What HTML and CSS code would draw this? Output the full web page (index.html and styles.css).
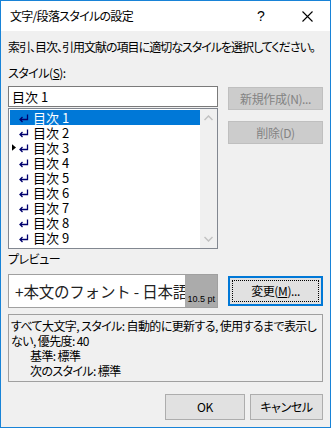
FILE: index.html
```html
<!DOCTYPE html>
<html lang="ja">
<head>
    <meta charset="UTF-8">
    <title>文字/段落スタイルの設定</title>
    <link rel="stylesheet" href="styles.css">
</head>
<body>
    <div class="window">
        <div class="titlebar">
            <span class="title">文字/段落スタイルの設定</span>
            <span class="help">?</span>
            <span class="close">
                <svg width="11" height="11" viewBox="0 0 11 11"><path d="M0.5 0.5 L10.5 10.5 M10.5 0.5 L0.5 10.5" stroke="#000" stroke-width="1.1" fill="none"/></svg>
            </span>
        </div>
        <div class="content">
            <p class="intro">索引、目次、引用文献の項目に適切なスタイルを選択してください。</p>
            <div class="label">スタイル(<u>S</u>):</div>
            <div class="style-row">
                <div class="style-left">
                    <div class="textbox">目次 1</div>
                    <div class="listbox">
                        <ul class="items">
                            <li class="selected"><span class="mark"></span><svg class="ret" viewBox="0 0 10 9"><path d="M8.5 0.5 V5.5 H1.5 M3.5 3 L1 5.5 L3.5 8" stroke="#00006e" stroke-width="1.3" fill="none"/></svg>目次 1</li>
                            <li><span class="mark"></span><svg class="ret" viewBox="0 0 10 9"><path d="M8.5 0.5 V5.5 H1.5 M3.5 3 L1 5.5 L3.5 8" stroke="#00006e" stroke-width="1.3" fill="none"/></svg>目次 2</li>
                            <li><span class="mark"><svg viewBox="0 0 5 8"><path d="M0 0 L5 4 L0 8 Z" fill="#000"/></svg></span><svg class="ret" viewBox="0 0 10 9"><path d="M8.5 0.5 V5.5 H1.5 M3.5 3 L1 5.5 L3.5 8" stroke="#00006e" stroke-width="1.3" fill="none"/></svg>目次 3</li>
                            <li><span class="mark"></span><svg class="ret" viewBox="0 0 10 9"><path d="M8.5 0.5 V5.5 H1.5 M3.5 3 L1 5.5 L3.5 8" stroke="#00006e" stroke-width="1.3" fill="none"/></svg>目次 4</li>
                            <li><span class="mark"></span><svg class="ret" viewBox="0 0 10 9"><path d="M8.5 0.5 V5.5 H1.5 M3.5 3 L1 5.5 L3.5 8" stroke="#00006e" stroke-width="1.3" fill="none"/></svg>目次 5</li>
                            <li><span class="mark"></span><svg class="ret" viewBox="0 0 10 9"><path d="M8.5 0.5 V5.5 H1.5 M3.5 3 L1 5.5 L3.5 8" stroke="#00006e" stroke-width="1.3" fill="none"/></svg>目次 6</li>
                            <li><span class="mark"></span><svg class="ret" viewBox="0 0 10 9"><path d="M8.5 0.5 V5.5 H1.5 M3.5 3 L1 5.5 L3.5 8" stroke="#00006e" stroke-width="1.3" fill="none"/></svg>目次 7</li>
                            <li><span class="mark"></span><svg class="ret" viewBox="0 0 10 9"><path d="M8.5 0.5 V5.5 H1.5 M3.5 3 L1 5.5 L3.5 8" stroke="#00006e" stroke-width="1.3" fill="none"/></svg>目次 8</li>
                            <li><span class="mark"></span><svg class="ret" viewBox="0 0 10 9"><path d="M8.5 0.5 V5.5 H1.5 M3.5 3 L1 5.5 L3.5 8" stroke="#00006e" stroke-width="1.3" fill="none"/></svg>目次 9</li>
                        </ul>
                        <div class="scrollbar">
                            <svg width="9" height="6" viewBox="0 0 9 6"><path d="M0.5 5 L4.5 1 L8.5 5" stroke="#c2c2c2" stroke-width="1.5" fill="none"/></svg>
                            <svg width="9" height="6" viewBox="0 0 9 6"><path d="M0.5 1 L4.5 5 L8.5 1" stroke="#c2c2c2" stroke-width="1.5" fill="none"/></svg>
                        </div>
                    </div>
                </div>
                <div class="side-buttons">
                    <button class="btn" disabled>新規作成(N)...</button>
                    <button class="btn" disabled>削除(D)</button>
                </div>
            </div>
            <div class="label preview-label">プレビュー</div>
            <div class="preview-row">
                <div class="preview">
                    <span class="sample">+本文のフォント - 日本語</span>
                    <span class="size">10.5 pt</span>
                </div>
                <button class="btn focused"><span class="focus-ring">変更(<u>M</u>)...</span></button>
            </div>
            <div class="details">
                <div>すべて大文字, スタイル: 自動的に更新する, 使用するまで表示しない, 優先度: 40</div>
                <div class="indent">基準: 標準</div>
                <div class="indent">次のスタイル: 標準</div>
            </div>
            <div class="footer">
                <button class="btn ok">OK</button>
                <button class="btn cancel">キャンセル</button>
            </div>
        </div>
    </div>
</body>
</html>
```

FILE: styles.css
```css
html, body {
    margin: 0;
    padding: 0;
    width: 331px;
    height: 428px;
    overflow: hidden;
}

body {
    font-family: "Noto Sans CJK JP", sans-serif;
    font-size: 12px;
    font-feature-settings: "palt" 1;
    color: #000;
}

.window {
    box-sizing: border-box;
    width: 331px;
    height: 428px;
    border: 1px solid #1883d7;
    background: #f0f0f0;
    display: flex;
    flex-direction: column;
}

.titlebar {
    height: 30px;
    background: #fff;
    display: flex;
    align-items: center;
    padding-left: 9px;
}

.title {
    flex: 1;
    line-height: 16px;
    letter-spacing: -0.7px;
}

.help {
    font-family: "Liberation Sans", sans-serif;
    font-size: 14px;
    width: 46px;
    text-align: center;
}

.close {
    width: 46px;
    display: flex;
    justify-content: center;
}

.content {
    padding: 0 7px;
    display: flex;
    flex-direction: column;
}

.intro {
    margin: 8px 0 0;
    line-height: 16px;
    white-space: nowrap;
    letter-spacing: -1px;
}

.label {
    margin-top: 10px;
    line-height: 16px;
    letter-spacing: -0.5px;
}

.style-row {
    display: flex;
    gap: 10px;
    margin-top: 5px;
}

.style-left {
    width: 211px;
    display: flex;
    flex-direction: column;
    gap: 1px;
}

.textbox {
    box-sizing: border-box;
    height: 21px;
    background: #fff;
    border: 1px solid #7a7a7a;
    padding-left: 3px;
    font-size: 13px;
    line-height: 19px;
}

.listbox {
    box-sizing: border-box;
    height: 141px;
    background: #fff;
    border: 1px solid #828790;
    display: flex;
    padding: 1px 0 1px 1px;
}

.items {
    list-style: none;
    margin: 0;
    padding: 0;
    flex: 1;
}

.items li {
    height: 15px;
    line-height: 15px;
    font-size: 13px;
    display: flex;
    align-items: center;
    padding-left: 2px;
}

.items li.selected {
    background: #0078d7;
    color: #fff;
}

.mark {
    width: 6px;
    display: flex;
    align-items: center;
}

.mark svg {
    width: 4px;
    height: 7px;
}

.ret {
    width: 10px;
    height: 9px;
    margin: 1px 4px 0 1px;
}

.scrollbar {
    width: 17px;
    background: #f0f0f0;
    margin-top: -1px;
    margin-bottom: -1px;
    display: flex;
    flex-direction: column;
    justify-content: space-between;
    align-items: center;
    padding: 6px 0;
    box-sizing: border-box;
}

.side-buttons {
    display: flex;
    flex-direction: column;
    gap: 11px;
    margin-top: 1px;
}

.btn {
    box-sizing: border-box;
    width: 95px;
    height: 23px;
    font-family: inherit;
    font-size: 12px;
    font-feature-settings: "palt" 1;
    letter-spacing: -0.4px;
    background: #e1e1e1;
    border: 1px solid #adadad;
    color: #000;
    padding: 0;
    margin: 0;
    line-height: 16px;
}

.btn:disabled {
    background: #cccccc;
    border-color: #bfbfbf;
    color: #838383;
}

.preview-label {
    margin-top: 2px;
}

.preview-row {
    display: flex;
    align-items: center;
    gap: 10px;
    margin-top: 7px;
}

.preview {
    box-sizing: border-box;
    width: 210px;
    height: 34px;
    background: #fff;
    border: 1px solid #a0a0a0;
    position: relative;
    overflow: hidden;
    display: flex;
    align-items: center;
    padding-left: 6px;
}

.sample {
    font-size: 15.5px;
    white-space: nowrap;
    font-feature-settings: normal;
    letter-spacing: -0.2px;
    color: #222;
}

.size {
    position: absolute;
    top: 0;
    right: 0;
    bottom: 0;
    width: 32px;
    background: #ababab;
    font-family: "Liberation Sans", sans-serif;
    font-size: 9px;
    letter-spacing: 0;
    display: flex;
    align-items: flex-end;
    justify-content: flex-end;
    padding: 0 2px 3px 0;
    box-sizing: border-box;
}

.btn.focused {
    height: 30px;
    border: 2px solid #0078d7;
    padding: 2px;
    display: flex;
}

.focus-ring {
    flex: 1;
    border: 1px dotted #000;
    display: flex;
    align-items: center;
    justify-content: center;
}

.details {
    box-sizing: border-box;
    height: 68px;
    margin-top: 6px;
    border: 1px solid #a0a0a0;
    padding: 3px 2px 0 2px;
    line-height: 15px;
    letter-spacing: -0.6px;
}

.indent {
    padding-left: 19px;
}

.footer {
    display: flex;
    justify-content: flex-end;
    gap: 5px;
    margin-top: 12px;
}

.btn.ok {
    width: 80px;
    height: 26px;
}

.btn.cancel {
    width: 73px;
    height: 26px;
}
```
